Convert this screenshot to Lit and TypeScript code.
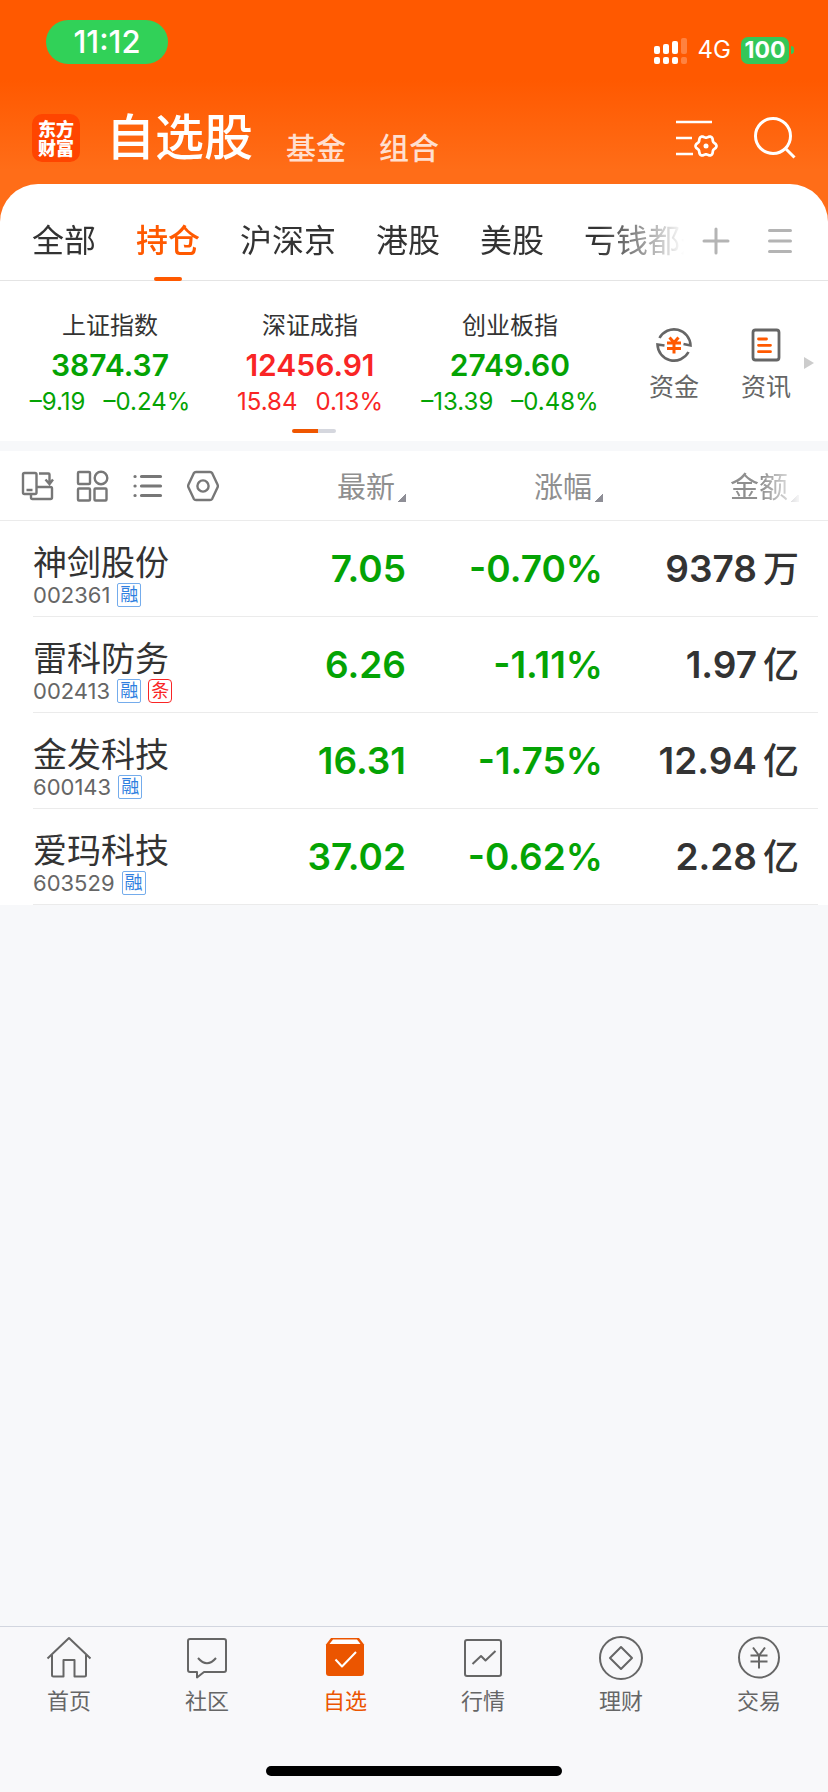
import { LitElement, html, css, svg } from "lit";
import { customElement, state } from "lit/decorators.js";
import { classMap } from "lit/directives/class-map.js";

interface Index { name: string; value: string; diff: string; pct: string; up: boolean }
interface Quote { name: string; code: string; tags: string[]; price: string; pct: string; amount: string; unit: string }

const INDICES: Index[] = [
  { name: "上证指数", value: "3874.37", diff: "–9.19", pct: "–0.24%", up: false },
  { name: "深证成指", value: "12456.91", diff: "15.84", pct: "0.13%", up: true },
  { name: "创业板指", value: "2749.60", diff: "–13.39", pct: "–0.48%", up: false },
];

const QUOTES: Quote[] = [
  { name: "神剑股份", code: "002361", tags: ["融"], price: "7.05", pct: "-0.70%", amount: "9378", unit: "万" },
  { name: "雷科防务", code: "002413", tags: ["融", "条"], price: "6.26", pct: "-1.11%", amount: "1.97", unit: "亿" },
  { name: "金发科技", code: "600143", tags: ["融"], price: "16.31", pct: "-1.75%", amount: "12.94", unit: "亿" },
  { name: "爱玛科技", code: "603529", tags: ["融"], price: "37.02", pct: "-0.62%", amount: "2.28", unit: "亿" },
];

const GROUPS = ["全部", "持仓", "沪深京", "港股", "美股", "亏钱都是"];

/** Outline of a six-lobed gear around (cx, cy). */
function gear(cx: number, cy: number, radius: number, lobe: number): string {
  const points = Array.from({ length: 72 }, (_, i) => {
    const a = (i / 72) * Math.PI * 2;
    const r = radius + lobe * Math.cos(6 * a);
    return `${(cx + r * Math.cos(a)).toFixed(2)} ${(cy + r * Math.sin(a)).toFixed(2)}`;
  });
  return `M${points.join("L")}z`;
}

const NAV = [
  { label: "首页", icon: svg`<path d="M1.500 23.500 23 3l21.500 20.500M6 20v20q0 1.500 1.500 1.500H17.500V25h11v16.500h10q1.500 0 1.500-1.500V20"/>` },
  { label: "社区", icon: svg`<path d="M6 4h34q2 0 2 2v29q0 2-2 2H20l-7 5.500V37H6q-2 0-2-2V6q0-2 2-2z"/><path d="M14 23q9 10.500 18 0"/>` },
  { label: "自选", icon: svg`<path class="solid" d="M9 3h28l5 6.500V38q0 3-3 3H7q-3 0-3-3V9.500z"/><path class="gap" d="M11 4.500h24l3.500 4.500h-31z"/><path class="tick" d="m13.500 24.500 6.500 7 14-14.500"/>` },
  { label: "行情", icon: svg`<rect x="5" y="5" width="36" height="36" rx="2"/><path d="m12.500 29 8.500-8 4.500 4.500L35.500 16"/>` },
  { label: "理财", icon: svg`<circle cx="23" cy="23" r="21"/><path d="M23 12 34 23 23 34 12 23z"/>` },
  { label: "交易", icon: svg`<circle cx="23" cy="22.500" r="20"/><path d="m17 12.500 6 8 6-8M14.500 20.500h17M14.500 26.500h17M23 20.500v13"/>` },
];

@customElement("app-root")
export class AppRoot extends LitElement {
  @state() private group = 1;

  static styles = css`
    :host {
      display: flex;
      flex-direction: column;
      min-height: 100vh;
      background: #f7f8fa;
      color: #333;
      font-family: Inter, "Noto Sans CJK SC", sans-serif;
    }
    * { box-sizing: border-box; }
    button { border: 0; padding: 0; background: none; font: inherit; color: inherit; cursor: pointer; white-space: nowrap; }
    a { color: inherit; text-decoration: none; }
    svg { display: block; fill: none; stroke: currentColor; }

    .top { background: linear-gradient(#ff5900 80px, #ff6d18 170px, #ff6d18); color: #fff; }
    .status { display: flex; justify-content: space-between; align-items: flex-start; height: 84px; padding: 20px 34px 0 46px; }
    .clock { width: 122px; border-radius: 22px; background: #31d158; font-size: 31px; line-height: 44px; font-weight: 500; text-align: center; }
    .signals { display: flex; align-items: center; padding-top: 16px; }
    .net { margin: 0 10px 0 11px; font-size: 24px; line-height: 28px; }
    .battery { width: 48px; border-radius: 7px; background: #34c759; font-size: 23px; line-height: 27px; font-weight: 700; text-align: center; }
    .cap { width: 3px; height: 8px; margin-left: 2px; border-radius: 0 4px 4px 0; background: #34c759; }

    .head { display: flex; align-items: center; height: 100px; padding: 8px 32px 0; }
    .brand { width: 48px; height: 48px; padding-top: 6px; border-radius: 10px; background: #ff4500; font-size: 18px; line-height: 19px; font-weight: 900; text-align: center; }
    .modes { display: flex; flex: 1; align-items: flex-end; gap: 33px; margin-left: 26px; font-size: 30px; font-weight: 500; }
    .modes button { color: #ffdfcf; line-height: 44px; }
    .modes .current { font-size: 49px; line-height: 64px; color: #fff; }
    .tools { display: flex; gap: 36px; }

    .sheet { background: #ff6d18; }
    .groups { display: flex; align-items: center; height: 97px; padding: 0 36px 0 32px; border-bottom: 1px solid #e4e4e4; border-radius: 38px 38px 0 0; background: #fff; }
    .tabs { display: flex; flex: 1; gap: 40px; height: 97px; margin-bottom: -1px; overflow: hidden; font-size: 32px; mask-image: linear-gradient(90deg, #000 calc(100% - 84px), transparent); }
    .tabs button { position: relative; flex: none; padding-top: 17px; line-height: 80px; }
    .tabs .on { color: #ff5900; font-weight: 500; }
    .tabs .on::after { content: ""; position: absolute; left: calc(50% - 14px); bottom: 0; width: 28px; height: 4px; border-radius: 2px; background: #ff5900; }
    .edit { display: flex; gap: 38px; margin-left: 18px; padding-top: 17px; color: #b4b4b4; }

    .market { display: flex; height: 160px; padding: 0 14px 0 10px; background: #fff; }
    .indices { display: grid; grid-template-columns: repeat(3, 1fr); flex: 1; align-content: start; padding-top: 29px; text-align: center; }
    .index .name { font-size: 24px; line-height: 32px; }
    .index .value { font-size: 30px; line-height: 46px; font-weight: 600; }
    .index .moves { display: flex; justify-content: center; gap: 18px; font-size: 24px; line-height: 28px; }
    .up { color: #f92525; }
    .down { color: #04a304; }
    .pager { grid-column: 2; justify-self: center; width: 44px; height: 4px; margin: 13px 0 0 8px; border-radius: 2px; background: linear-gradient(90deg, #ef5600 26px, #d5d7de 26px); }
    .links { display: flex; align-items: flex-start; gap: 42px; padding: 44px 13px 0 0; margin-left: 39px; }
    .links a { display: grid; justify-items: center; gap: 4px; font-size: 25px; line-height: 36px; color: #666; }
    .more { align-self: center; margin-top: 3px; }

    .quotes { display: block; margin-top: 10px; background: #fff; }
    .quotes thead, .quotes tbody { display: block; }
    .quotes tr { display: grid; grid-template-columns: minmax(0, 1fr) 180px 197px 196px; align-items: center; }
    .quotes th, .quotes td { padding: 0; text-align: right; }
    .columns { height: 70px; padding: 0 29px 0 20px; border-bottom: 1px solid #ebebeb; color: #8f8f8f; font-size: 29px; }
    .quotes .columns th { font-weight: 400; }
    .columns .views { display: flex; gap: 21px; color: #777; }
    .sort { display: inline-flex; align-items: flex-end; gap: 3px; padding-top: 4px; line-height: 40px; }
    .sort::after { content: ""; width: 8px; height: 8px; margin-bottom: 6px; background: linear-gradient(135deg, transparent 50%, #8e8e96 50%); }
    .fade { mask-image: linear-gradient(90deg, #000 45%, transparent 105%); }
    .row { height: 96px; margin: 0 10px 0 33px; padding-right: 19px; border-bottom: 1px solid #ebebeb; font-size: 37px; font-weight: 600; }
    .quotes .row th { padding-top: 12px; text-align: left; font-weight: 400; }
    .stock { display: block; font-size: 34px; line-height: 40px; white-space: nowrap; }
    .meta { display: flex; align-items: center; height: 24px; gap: 7px; font-size: 22px; color: #666; }
    .tag { width: 24px; height: 24px; border: 1px solid #74acec; border-radius: 2px; color: #2f7fe0; font-size: 18px; line-height: 21px; text-align: center; }
    .tag.alert { border-color: #f92525; border-radius: 4px; color: #f92525; }
    .unit { margin-left: 6px; font-size: 36px; font-weight: 500; line-height: 40px; }
    .row td { line-height: 44px; white-space: nowrap; }

    .bar { display: flex; flex-direction: column; align-items: center; justify-content: space-between; height: 166px; margin-top: auto; padding: 8px 0 16px; border-top: 1px solid #d2d6df; background: #f8f8fa; }
    .nav { display: grid; grid-template-columns: repeat(6, 1fr); width: 100%; }
    .nav a { display: grid; justify-items: center; gap: 4px; font-size: 22px; line-height: 32px; color: #666; }
    .nav svg { stroke-width: 2; stroke-linejoin: round; }
    .nav a.here { color: #eb5500; }
    .solid { fill: #eb5500; stroke: none; }
    .gap { fill: #fff; stroke: none; }
    .tick { stroke: #fff; }
    .home { width: 296px; height: 10px; border-radius: 5px; background: #000; }
  `;

  render() {
    return html`
      <header class="top">
        <div class="status">
          <time class="clock">11:12</time>
          <div class="signals">
            <svg width="33" height="27" viewBox="0 0 33 27" aria-hidden="true">
              <g fill="#fff" stroke="none">
                <rect x="0" y="9" width="6" height="8" rx="2"/><rect x="9" y="7" width="6" height="10" rx="2"/>
                <rect x="18" y="4" width="6" height="13" rx="2"/><rect x="27" y="1" width="6" height="16" rx="2" opacity=".25"/>
                <rect x="0" y="20" width="6" height="7" rx="2"/><rect x="9" y="20" width="6" height="7" rx="2"/>
                <rect x="18" y="20" width="6" height="7" rx="2"/><rect x="27" y="20" width="6" height="7" rx="2" opacity=".25"/>
              </g>
            </svg>
            <span class="net">4G</span>
            <span class="battery">100</span><span class="cap"></span>
          </div>
        </div>
        <div class="head">
          <div class="brand">东方<br>财富</div>
          <nav class="modes">
            <button class="current">自选股</button>
            <button>基金</button>
            <button>组合</button>
          </nav>
          <div class="tools">
            <button aria-label="列表设置">
              <svg width="42" height="42" viewBox="0 0 42 42" stroke-width="2.700">
                <path d="M0 5h36M0 21h16M0 37h17"/>
                <path stroke-linejoin="round" d=${gear(30, 29, 9.4, 1.1)}/>
                <circle cx="30" cy="29" r="2.500" fill="currentColor" stroke="none"/>
              </svg>
            </button>
            <button aria-label="搜索">
              <svg width="42" height="42" viewBox="0 0 42 42" stroke-width="3"><circle cx="19" cy="19" r="17.500"/><path d="m31.500 31.500 9 9"/></svg>
            </button>
          </div>
        </div>
      </header>

      <div class="sheet">
        <div class="groups">
          <nav class="tabs">
            ${GROUPS.map((g, i) => html`<button class=${classMap({ on: i === this.group })} @click=${() => (this.group = i)}>${g}</button>`)}
          </nav>
          <div class="edit">
            <button aria-label="添加分组"><svg width="28" height="28" viewBox="0 0 28 28" stroke-width="3" stroke-linecap="round"><path d="M14 2v24M2 14h24"/></svg></button>
            <button aria-label="分组管理"><svg width="24" height="28" viewBox="0 0 24 28" stroke-width="3" stroke-linecap="round"><path d="M1.500 3.500h21M1.500 14h21M1.500 24.500h21"/></svg></button>
          </div>
        </div>
      </div>

      <section class="market">
        <div class="indices">
          ${INDICES.map((x) => html`
            <div class="index">
              <div class="name">${x.name}</div>
              <div class=${x.up ? "up" : "down"}>
                <div class="value">${x.value}</div>
                <div class="moves"><span>${x.diff}</span><span>${x.pct}</span></div>
              </div>
            </div>`)}
          <div class="pager"></div>
        </div>
        <div class="links">
          <a href="#funds">
            <svg width="40" height="40" viewBox="0 0 40 40" stroke="#333" stroke-width="2.600">
              <path d="M5.500 13A16.500 16.500 0 0 1 36.500 20.500L29.500 19"/><path d="M34.500 27A16.500 16.500 0 0 1 3.500 19.500L10.500 20.500"/>
              <path stroke="#ff5900" stroke-width="3" d="m15.500 12.500 4.500 5 4.500-5M13 18h14M13 23.500h14M20 18v10.500"/>
            </svg>资金</a>
          <a href="#news">
            <svg width="40" height="40" viewBox="0 0 40 40" stroke="#333" stroke-width="2.800">
              <rect x="7" y="5" width="26" height="30" rx="2.500"/>
              <path stroke="#ff5900" stroke-width="2.800" stroke-linecap="round" d="M12.500 14h8M12.500 20.300h12M12.500 26.700h12"/>
            </svg>资讯</a>
        </div>
        <svg class="more" width="10" height="12" viewBox="0 0 10 12"><path d="M0 0 10 6 0 12z" fill="#ccc" stroke="none"/></svg>
      </section>

      <table class="quotes">
        <thead>
          <tr class="columns">
            <th class="views">
              <button aria-label="横屏"><svg width="34" height="34" viewBox="0 0 34 34" stroke-width="2.400">
                <rect x="3" y="4" width="13.500" height="21" rx="1.500"/><path d="M6.500 21h6M19 4.500h9.500q1 0 1 1V14M25.500 10.500l4 4.500 3.500-4.500M17 18h13.500q1.500 0 1.500 1.500v9q0 1.500-1.500 1.500h-18q-1.500 0-1.500-1.500V25"/></svg></button>
              <button aria-label="宫格"><svg width="34" height="34" viewBox="0 0 34 34" stroke-width="2.400">
                <rect x="3" y="3" width="12" height="12" rx="1"/><circle cx="26" cy="9" r="6.300"/><rect x="3" y="19.500" width="12" height="12" rx="1"/><rect x="19.500" y="19.500" width="12" height="12" rx="1"/></svg></button>
              <button aria-label="列表"><svg width="34" height="34" viewBox="0 0 34 34" stroke-width="3.200" stroke-linecap="round">
                <path d="M11.500 7.500h19M11.500 17h19M11.500 26.500h19M5 7.500h.1M5 17h.1M5 26.500h.1"/></svg></button>
              <button aria-label="设置"><svg width="34" height="34" viewBox="0 0 34 34" stroke-width="2.400" stroke-linejoin="round">
                <path d="M11 3h14q1.500 0 2.200 1.200L32.500 15.500q.7 1.500 0 3L27.200 29.800Q26.500 31 25 31H11Q9.500 31 8.800 29.800L3.500 18.500q-.7-1.500 0-3L8.800 4.200Q9.500 3 11 3z"/><circle cx="18" cy="17" r="5.600"/></svg></button>
            </th>
            <th><button class="sort">最新</button></th>
            <th><button class="sort">涨幅</button></th>
            <th><button class="sort fade">金额</button></th>
          </tr>
        </thead>
        <tbody>
          ${QUOTES.map((q) => html`
            <tr class="row">
              <th scope="row">
                <span class="stock">${q.name}</span>
                <span class="meta">${q.code}${q.tags.map((t) => html`<span class=${classMap({ tag: true, alert: t === "条" })}>${t}</span>`)}</span>
              </th>
              <td class="down">${q.price}</td>
              <td class="down">${q.pct}</td>
              <td>${q.amount}<span class="unit">${q.unit}</span></td>
            </tr>`)}
        </tbody>
      </table>

      <footer class="bar">
        <nav class="nav">
          ${NAV.map((n, i) => html`
            <a href="#tab${i}" class=${classMap({ here: i === 2 })}>
              <svg width="46" height="46" viewBox="0 0 46 46">${n.icon}</svg>${n.label}
            </a>`)}
        </nav>
        <div class="home"></div>
      </footer>
    `;
  }
}
